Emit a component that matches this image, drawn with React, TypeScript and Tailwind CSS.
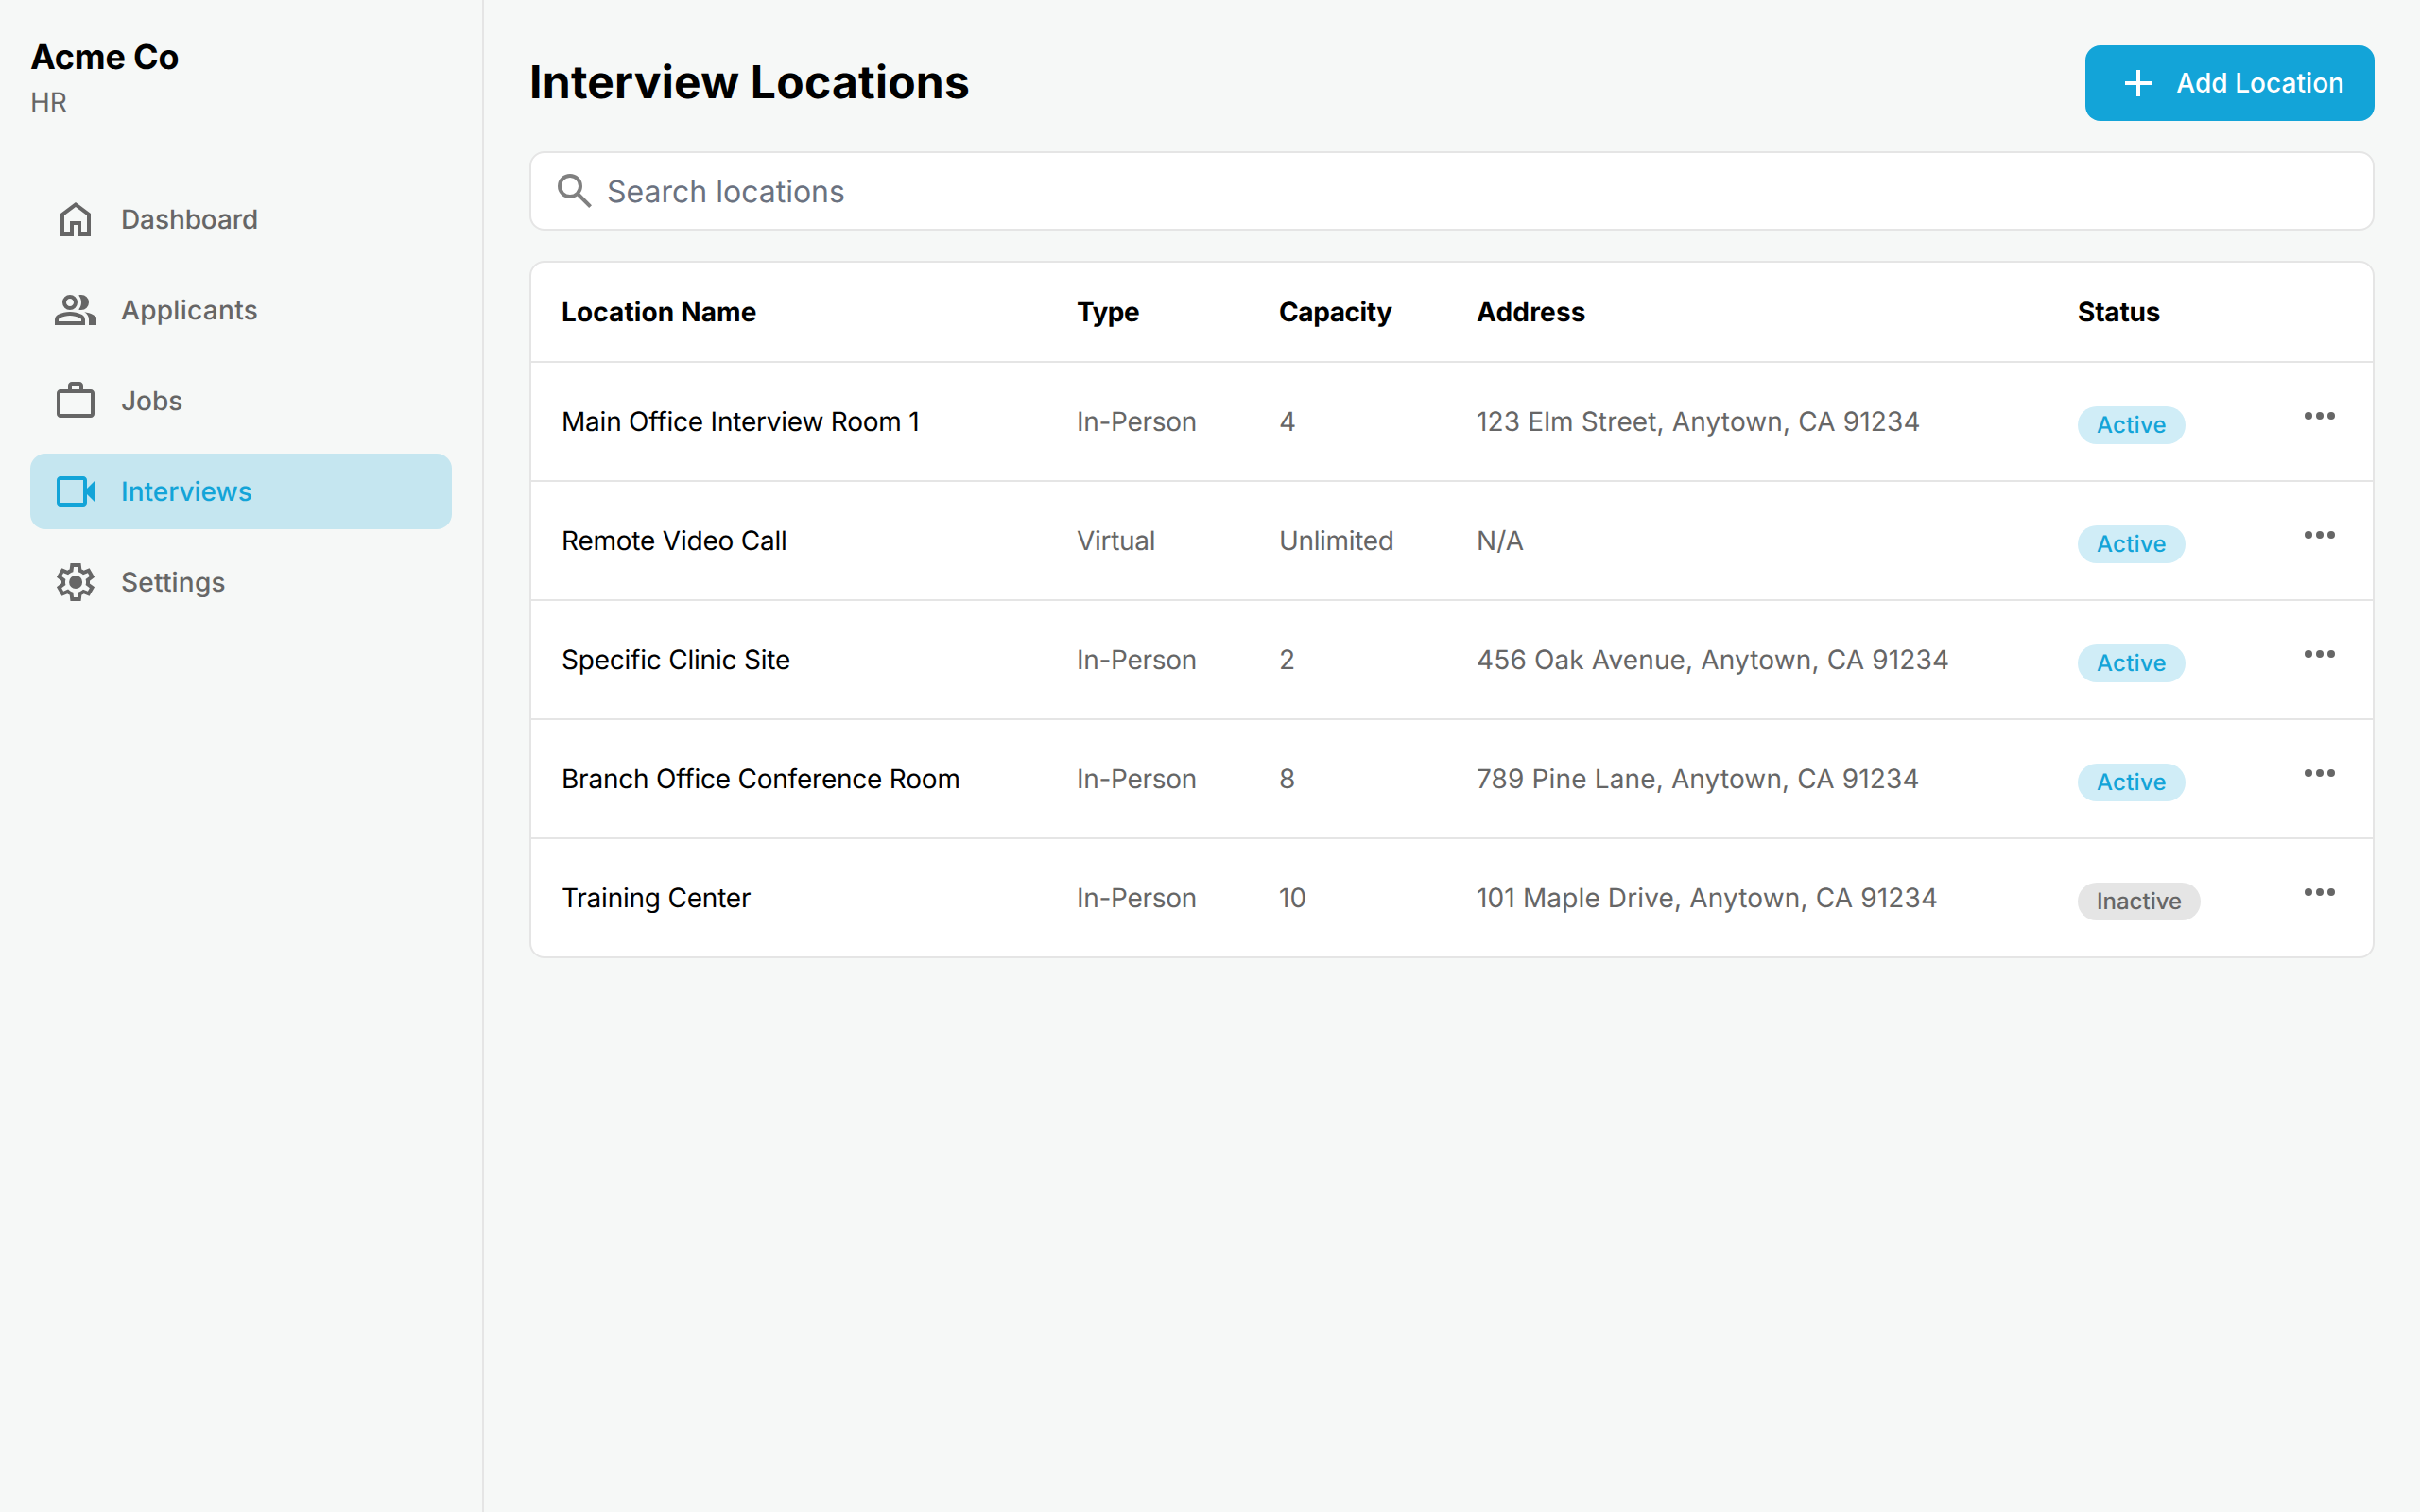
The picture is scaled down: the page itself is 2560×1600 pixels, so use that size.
import React from "react";

const P = {
  home: "M6 19h3v-6h6v6h3v-9l-6-4.5L6 10v9Zm-2 2V9l8-6 8 6v12h-7v-6h-2v6H4Z",
  group: "M1 20v-2.8q0-.85.44-1.56.44-.72 1.16-1.09 1.55-.78 3.15-1.16Q7.35 13 9 13t3.25.39q1.6.38 3.15 1.16.72.37 1.16 1.09.44.71.44 1.56V20H1Zm18 0v-3q0-1.1-.61-2.11-.61-1.01-1.74-1.74 1.27.15 2.4.51 1.13.36 2.1.89.9.5 1.38 1.11Q23 15.28 23 16v4h-4ZM9 12q-1.65 0-2.82-1.18Q5 9.65 5 8t1.18-2.82Q7.35 4 9 4t2.82 1.18Q13 6.35 13 8t-1.18 2.82Q10.65 12 9 12Zm10-4q0 1.65-1.18 2.82Q16.65 12 15 12q-.28 0-.7-.06t-.7-.14q.68-.8 1.04-1.77.36-.98.36-2.03t-.36-2.03q-.36-.98-1.04-1.77.35-.12.7-.16.35-.04.7-.04 1.65 0 2.82 1.18Q19 6.35 19 8ZM3 18h12v-.8q0-.27-.14-.5-.14-.22-.36-.35-1.35-.67-2.72-1.01Q10.4 15 9 15t-2.78.34q-1.37.34-2.72 1.01-.23.13-.36.35-.14.23-.14.5v.8Zm6-8q.82 0 1.41-.59Q11 8.83 11 8t-.59-1.41Q9.83 6 9 6t-1.41.59Q7 7.17 7 8t.59 1.41Q8.18 10 9 10Z",
  work: "M4 21q-.82 0-1.41-.59Q2 19.83 2 19V8q0-.82.59-1.41Q3.18 6 4 6h4V4q0-.82.59-1.41Q9.18 2 10 2h4q.82 0 1.41.59Q16 3.18 16 4v2h4q.82 0 1.41.59Q22 7.18 22 8v11q0 .83-.59 1.41Q20.83 21 20 21H4Zm0-2h16V8H4v11Zm6-13h4V4h-4v2Z",
  video: "M4 20q-.82 0-1.41-.59Q2 18.83 2 18V6q0-.82.59-1.41Q3.18 4 4 4h12q.82 0 1.41.59Q18 5.18 18 6v4.5l4-4v11l-4-4V18q0 .83-.59 1.41Q16.83 20 16 20H4Zm0-2h12V6H4v12Z",
  settings: "M9.25 22l-.4-3.2q-.33-.13-.61-.3-.29-.18-.56-.38L4.7 19.38 1.95 14.63 4.53 12.68q-.03-.18-.03-.34v-.68q0-.16.03-.34L1.95 9.38 4.7 4.63l2.98 1.25q.27-.2.57-.38.3-.18.6-.3L9.25 2h5.5l.4 3.2q.33.13.61.3.29.18.56.38l2.98-1.25 2.75 4.75-2.58 1.95q.03.18.03.34v.68q0 .16-.05.34l2.58 1.95-2.75 4.75-2.95-1.25q-.27.2-.57.38-.3.18-.6.3l-.4 3.2H9.25Zm1.75-2h1.98l.35-2.65q.77-.2 1.43-.59.66-.39 1.21-.94l2.48 1.03.98-1.7-2.15-1.63q.13-.35.18-.74.05-.39.05-.79t-.05-.79q-.05-.39-.18-.74l2.15-1.63-.98-1.7-2.48 1.05q-.55-.57-1.21-.96-.66-.39-1.43-.59L13 4h-1.98l-.35 2.65q-.77.2-1.43.59-.66.39-1.21.94l-2.48-1.03-.98 1.7 2.15 1.6q-.13.37-.18.75-.05.38-.05.8 0 .4.05.78.05.38.18.75l-2.15 1.63.98 1.7 2.48-1.05q.55.58 1.21.96.66.39 1.43.59L11 20Zm1.05-4.5q1.45 0 2.48-1.02 1.02-1.03 1.02-2.48t-1.02-2.48Q13.5 8.5 12.05 8.5q-1.48 0-2.49 1.02Q8.55 10.55 8.55 12t1.01 2.48q1.01 1.02 2.49 1.02Z",
  search: "M19.6 21l-6.3-6.3q-.75.6-1.73.95Q10.6 16 9.5 16q-2.73 0-4.61-1.89Q3 12.22 3 9.5t1.89-4.61Q6.78 3 9.5 3t4.61 1.89Q16 6.78 16 9.5q0 1.1-.35 2.08-.35.97-.95 1.72l6.3 6.3-1.4 1.4ZM9.5 14q1.88 0 3.19-1.31Q14 11.38 14 9.5t-1.31-3.19Q11.38 5 9.5 5T6.31 6.31Q5 7.63 5 9.5t1.31 3.19Q7.63 14 9.5 14Z",
  add: "M11 13H5v-2h6V5h2v6h6v2h-6v6h-2v-6Z",
};

function Icon({ d, className }: { d: string; className: string }) {
  return (
    <svg viewBox="0 0 24 24" fill="currentColor" className={className}>
      <path d={d} />
    </svg>
  );
}

const nav = [
  { label: "Dashboard", d: P.home, text: "tracking-[-0.1px]" },
  { label: "Applicants", d: P.group, text: "tracking-[0.3px]" },
  { label: "Jobs", d: P.work, text: "" },
  { label: "Interviews", d: P.video, active: true, text: "" },
  { label: "Settings", d: P.settings, text: "tracking-[0.2px]" },
];

const rows = [
  ["Main Office Interview Room 1", "In-Person", "4", "123 Elm Street, Anytown, CA 91234", "Active"],
  ["Remote Video Call", "Virtual", "Unlimited", "N/A", "Active"],
  ["Specific Clinic Site", "In-Person", "2", "456 Oak Avenue, Anytown, CA 91234", "Active"],
  ["Branch Office Conference Room", "In-Person", "8", "789 Pine Lane, Anytown, CA 91234", "Active"],
  ["Training Center", "In-Person", "10", "101 Maple Drive, Anytown, CA 91234", "Inactive"],
];

export default function App() {
  return (
    <div className="flex min-h-[1600px] bg-[#f6f8f7] font-['Inter',sans-serif] text-black [text-rendering:geometricPrecision]">
      <aside className="w-[512px] shrink-0 border-r-2 border-[#e5e5e5] px-8 pt-[32px]">
        <div className="h-[44px] text-[36px] font-bold leading-[56px] tracking-[-0.2px]">Acme Co</div>
        <div className="mt-[12px] text-[28px] leading-[40px] text-[#666666]">HR</div>
        <nav className="mt-[64px] flex flex-col gap-4">
          {nav.map((n) => (
            <div
              key={n.label}
              className={
                n.active
                  ? "flex h-20 items-center gap-6 rounded-2xl bg-[#c5e6f0] px-6 text-[#13a4d8]"
                  : "flex h-20 items-center gap-6 rounded-2xl px-6 text-[#666666]"
              }
            >
              <Icon d={n.d} className="h-12 w-12 shrink-0" />
              <span className={"text-[28px] font-medium leading-10 " + n.text}>{n.label}</span>
            </div>
          ))}
        </nav>
      </aside>
      <main className="min-w-0 flex-1 p-12">
        <div className="flex h-20 items-center justify-between">
          <h1 className="pb-[2px] text-[48px] font-bold leading-[60px] tracking-[0.26px]">Interview Locations</h1>
          <button className="flex h-20 items-center gap-4 rounded-2xl bg-[#13a4d8] px-8 text-white">
            <Icon d={P.add} className="h-12 w-12 shrink-0" />
            <span className="text-[28px] font-medium leading-10 tracking-[0.05px]">Add Location</span>
          </button>
        </div>
        <div className="mt-8 flex h-[84px] items-center gap-[10px] rounded-2xl border-2 border-[#e5e5e5] bg-white pl-[22px]">
          <Icon d={P.search} className="h-12 w-12 shrink-0 text-[#808080]" />
          <span className="pt-[2px] text-[32px] leading-10 text-[#6b7280]">Search locations</span>
        </div>
        <div className="mt-8 overflow-hidden rounded-2xl border-2 border-[#e5e5e5] bg-white">
          <table className="w-full table-fixed border-collapse text-left">
            <colgroup>
              <col className="w-[545px]" />
              <col className="w-[214px]" />
              <col className="w-[209px]" />
              <col className="w-[636px]" />
              <col className="w-[212px]" />
              <col />
            </colgroup>
            <thead>
              <tr className="h-[105px] border-b-2 border-[#e5e5e5] text-[28px] leading-10">
                <th className="px-8 font-bold tracking-[0.12px]">Location Name</th>
                <th className="px-8 font-bold tracking-[-0.5px]">Type</th>
                <th className="px-8 font-bold tracking-[-0.4px]">Capacity</th>
                <th className="px-8 font-bold tracking-[0.2px]">Address</th>
                <th className="px-8 font-bold tracking-[-0.2px]">Status</th>
                <th />
              </tr>
            </thead>
            <tbody>
              {rows.map((r, i) => (
                <tr
                  key={r[0]}
                  className={
                    i < rows.length - 1
                      ? "h-[126px] border-b-2 border-[#e5e5e5] text-[28px] leading-10"
                      : "h-[125px] text-[28px] leading-10"
                  }
                >
                  <td className="px-8 tracking-[-0.22px] text-black">{r[0]}</td>
                  <td className="px-8 tracking-[-0.3px] text-[#666666]">{r[1]}</td>
                  <td className={r[2] === "Unlimited" ? "px-8 tracking-[-0.35px] text-[#666666]" : "px-8 text-[#666666]"}>{r[2]}</td>
                  <td className="px-8 tracking-[0.14px] text-[#666666]">{r[3]}</td>
                  <td className="px-8 pt-[6px]">
                    <span
                      className={
                        r[4] === "Active"
                          ? "inline-flex h-10 items-center rounded-full bg-[#d0edf7] px-5 text-[24px] font-medium tracking-[0.25px] text-[#13a4d8]"
                          : "inline-flex h-10 items-center rounded-full bg-[#e5e5e5] px-5 text-[24px] font-medium text-[#666666]"
                      }
                    >
                      {r[4]}
                    </span>
                  </td>
                  <td className="pb-3 pr-8">
                    <svg viewBox="0 0 24 24" fill="currentColor" className="ml-auto h-12 w-12 text-[#666666]">
                      <circle cx="6" cy="12" r="2" />
                      <circle cx="12" cy="12" r="2" />
                      <circle cx="18" cy="12" r="2" />
                    </svg>
                  </td>
                </tr>
              ))}
            </tbody>
          </table>
        </div>
      </main>
    </div>
  );
}
